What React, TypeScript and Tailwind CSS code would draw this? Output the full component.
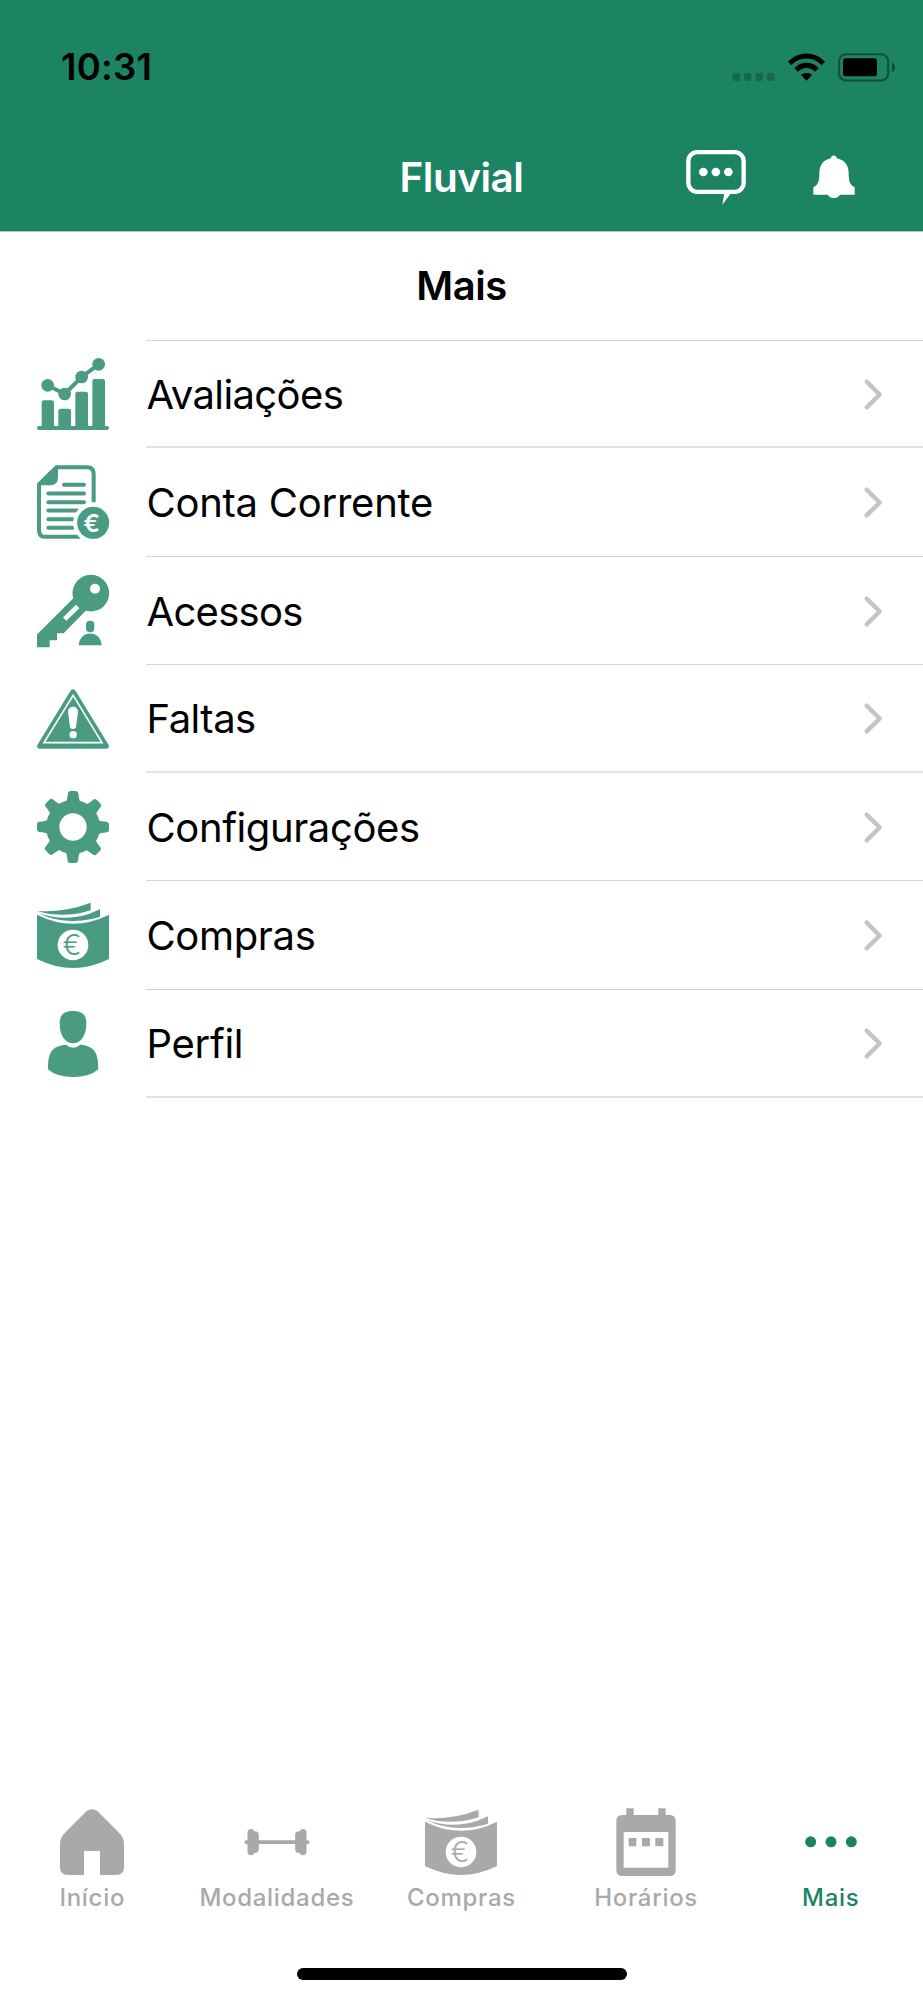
import type { ReactNode } from 'react'

type IconProps = { viewBox: string; className?: string; children: ReactNode }

function Icon({ viewBox, className = 'h-[72px] w-[72px]', children }: IconProps) {
  return (
    <svg viewBox={viewBox} className={`shrink-0 overflow-visible ${className}`} fill="currentColor" aria-hidden="true">
      {children}
    </svg>
  )
}

function ChartIcon() {
  return (
    <Icon viewBox="51 54 216 216">
      <path d="M65 260V188q0-7 7-7h23q7 0 7 7v72zM115 260V213q0-7 7-7h24q7 0 7 7v47zM166 260V162q0-7 7-7h24q7 0 7 7v98zM217 260V124q0-7 7-7h24q7 0 7 7v136z" />
      <rect x="51" y="258" width="216" height="12" rx="6" />
      <circle cx="83" cy="136" r="19" />
      <circle cx="134" cy="162" r="19" />
      <circle cx="185" cy="111" r="19" />
      <circle cx="236" cy="73" r="19" />
      <path d="M83 136L134 162L185 111L236 73" fill="none" stroke="currentColor" strokeWidth="12" />
    </Icon>
  )
}

function InvoiceIcon() {
  return (
    <Icon viewBox="51 379.5 216 216">
      <g fill="none" stroke="currentColor" strokeWidth="12">
        <path d="M221 488V403q0-20-20-20H110L57 435V572q0 20 20 20H180" />
        <path strokeLinecap="round" d="M132 436H192M85 462H192M85 488H192M85 513H172M85 539H158M85 565H158" />
      </g>
      <path d="M51 433L108 377L114 385V413q0 24-24 24H54z" />
      <circle cx="219.500" cy="550" r="54" fill="none" stroke="#fff" strokeWidth="12" />
      <circle cx="219.500" cy="550" r="48" />
      <text x="215" y="576" textAnchor="middle" fill="#fff" className="font-['Inter',sans-serif] text-[74px] font-semibold">€</text>
    </Icon>
  )
}

function KeyIcon() {
  return (
    <Icon viewBox="51 44.5 216 216">
      <path d="M51 223L160 114L198 151L131 219H111V240H89V261H51z" />
      <circle cx="212.500" cy="99" r="55" />
      <circle cx="225" cy="86" r="15" fill="#fff" />
      <path d="M129 172L168 134L178 144L139 182z" fill="#fff" />
      <rect x="198" y="182" width="25" height="34" rx="12" />
      <path d="M176 255C178 233 192 220 210.500 220S243 233 245 255z" />
    </Icon>
  )
}

function WarningIcon() {
  return (
    <Icon viewBox="51 370 216 216">
      <path d="M151 394q8-10 16 0L266 556q3 10-6 11H58q-9-1-6-11z" />
      <path d="M159.500 407L246 549H72z" fill="none" stroke="#fff" strokeWidth="5" />
      <path d="M144 456C144 436 174 436 174 456L168 501C167 510 151 510 150 501z" fill="#fff" />
      <circle cx="159.500" cy="525" r="11" fill="#fff" />
    </Icon>
  )
}

const teeth = [0, 45, 90, 135, 180, 225, 270, 315]

function GearIcon() {
  return (
    <Icon viewBox="51 65 216 216">
      <circle cx="159" cy="173" r="61" fill="none" stroke="currentColor" strokeWidth="40" />
      {teeth.map((a) => (
        <path key={a} transform={`rotate(${a} 159 173)`} d="M144 71q1-6 8-6h15q7 0 8 6q2 20 6 28h-43q4-8 6-28z" />
      ))}
    </Icon>
  )
}

function MoneyIcon() {
  return (
    <Icon viewBox="51 390 216 216">
      <path d="M51 437Q159 491 267 437V570Q159 624 51 570z" />
      <path d="M52 426Q130 432 212 401V424Q130 450 52 426z" />
      <path d="M54 432Q130 459 206 435L240 421V443Q140 474 54 432z" />
      <circle cx="159" cy="528" r="46" fill="#fff" />
      <text x="156" y="558" textAnchor="middle" className="font-['Inter',sans-serif] text-[84px] font-light">€</text>
    </Icon>
  )
}

function PersonIcon() {
  return (
    <Icon viewBox="51 84 216 216">
      <path d="M159 93C188 93 199 105 199 131C199 166 182 190 159 190S119 166 119 131C119 105 130 93 159 93z" />
      <path d="M84 268C84 218 94 199 138 194Q159 212 181 194C225 199 235 218 235 268Q210 291 159.500 291T84 268z" />
    </Icon>
  )
}

function HomeIcon() {
  return (
    <Icon viewBox="108 78 216 216">
      <path d="M199 94q17-13 34 0L297 158q15 15 15 34V261q0 24-24 24H240V213H192V285H144q-24 0-24-24V192q0-19 15-34z" />
    </Icon>
  )
}

function DumbbellIcon() {
  return (
    <Icon viewBox="661.5 78 216 216">
      <path d="M677 181H862a5 5.500 0 0 1 0 11H677a5 5.500 0 0 1 0-11z" />
      <path d="M681 156q1-9 11-9q8 0 9 7q14-1 14 11V208q0 12-14 11q-1 7-9 7q-10 0-11-9zM858 156q-1-9-11-9q-8 0-9 7q-14-1-14 11V208q0 12 14 11q1 7 9 7q10 0 11-9z" />
    </Icon>
  )
}

function CalendarIcon() {
  return (
    <Icon viewBox="719 78 216 216">
      <path d="M768 85h22v20h74V85h22v20h12q18 0 18 18V270q0 18-18 18H756q-18 0-18-18V123q0-18 18-18h12z" />
      <rect x="760" y="156" width="134" height="107" fill="#fff" />
      <rect x="775" y="174" width="23" height="25" rx="2" />
      <rect x="815" y="174" width="24" height="25" rx="2" />
      <rect x="855" y="174" width="24" height="25" rx="2" />
    </Icon>
  )
}

function DotsIcon() {
  return (
    <Icon viewBox="283.5 78 216 216">
      <circle cx="330.500" cy="185.500" r="16.500" />
      <circle cx="391.500" cy="185.500" r="16.500" />
      <circle cx="452.500" cy="185.500" r="16.500" />
    </Icon>
  )
}

function StatusIcons() {
  return (
    <Icon viewBox="216 66 492 90" className="h-[30px] w-[164px]">
      <g opacity="0.2">
        <rect x="218" y="129" width="22" height="24" rx="7" />
        <rect x="252" y="129" width="22" height="24" rx="7" />
        <rect x="286" y="129" width="23" height="24" rx="7" />
        <rect x="321" y="129" width="22" height="24" rx="7" />
      </g>
      <path d="M384 95C414 62 465 62 495 95L485 105C460 79 419 79 394 105z" />
      <path d="M403 115C423 93 456 93 476 115L465 125C450 110 429 110 414 125z" />
      <path d="M423 135C432 127 447 127 456 135L439.500 152z" />
      <rect x="537.500" y="72.500" width="147" height="79" rx="21" fill="none" stroke="currentColor" strokeWidth="6" opacity="0.4" />
      <rect x="549" y="85" width="102" height="54" rx="8" />
      <path d="M696 98q9 4 9 14t-9 14z" opacity="0.45" />
    </Icon>
  )
}

function ChatIcon() {
  return (
    <Icon viewBox="78 360 180 165" className="h-[55px] w-[60px]">
      <rect x="85" y="366.500" width="166" height="119" rx="27" fill="none" stroke="currentColor" strokeWidth="13" />
      <path d="M193 488L187 524L214 488z" />
      <circle cx="130" cy="426" r="13" />
      <circle cx="167.500" cy="426" r="13" />
      <circle cx="205" cy="426" r="13" />
    </Icon>
  )
}

function BellIcon() {
  return (
    <Icon viewBox="460 378 126 132" className="h-[44px] w-[42px]">
      <path d="M514 388a8.500 8.500 0 0 1 17 0C553 392 567 408 567 432C567 455 569 466 585 475V497H541Q535 507 523 507T504 497H461V475C477 466 479 455 479 432C479 408 492 392 514 388z" />
    </Icon>
  )
}

const rows = [
  { label: 'Avaliações', icon: <ChartIcon />, line: 'border-b-2 border-[#e2e2e2]', spacing: 'tracking-[-0.6px]' },
  { label: 'Conta Corrente', icon: <InvoiceIcon />, line: 'border-b border-[#d2d2d3]', spacing: 'tracking-[-0.25px]' },
  { label: 'Acessos', icon: <KeyIcon />, line: 'border-b border-[#d2d2d3]', spacing: 'tracking-[-0.7px]' },
  { label: 'Faltas', icon: <WarningIcon />, line: 'border-b-2 border-[#e2e2e2]', spacing: 'tracking-[-0.5px]' },
  { label: 'Configurações', icon: <GearIcon />, line: 'border-b border-[#d2d2d3]', spacing: 'tracking-[-0.4px]' },
  { label: 'Compras', icon: <MoneyIcon />, line: 'border-b border-[#d2d2d3]', spacing: 'tracking-[-0.35px]' },
  { label: 'Perfil', icon: <PersonIcon />, line: 'border-b-2 border-[#e2e2e2]', spacing: 'tracking-[-0.3px]' },
]

const tabs = [
  { label: 'Início', icon: <HomeIcon />, active: false },
  { label: 'Modalidades', icon: <DumbbellIcon />, active: false },
  { label: 'Compras', icon: <MoneyIcon />, active: false },
  { label: 'Horários', icon: <CalendarIcon />, active: false },
  { label: 'Mais', icon: <DotsIcon />, active: true },
]

export default function App() {
  return (
    <div className="flex h-[2000px] w-[923px] flex-col overflow-hidden bg-white font-['Inter',sans-serif] text-black">
      <header className="h-[232px] shrink-0 border-b border-[#b9c4c0] bg-[#1c8363]">
        <div className="flex h-[134px] items-center justify-between pl-[61px] pr-[27px]">
          <span className="pt-px text-[36.5px] font-[580] leading-none tracking-[0.3px]">10:31</span>
          <StatusIcons />
        </div>
        <div className="grid h-[86px] grid-cols-3 items-center text-white">
          <h1 className="col-start-2 pt-[3px] text-center text-[40.5px] font-[580] leading-none tracking-[-0.5px]">Fluvial</h1>
          <div className="flex items-center justify-end gap-[67px] pr-[68px]">
            <ChatIcon />
            <BellIcon />
          </div>
        </div>
      </header>

      <main className="flex-1">
        <h2 className="flex h-[108px] items-center justify-center text-[40px] font-[580] tracking-[-0.5px]">Mais</h2>
        <ul>
          {rows.map((row, i) => (
            <li key={row.label} className="flex h-[108.25px] items-center pl-[37px] text-[#499c82]">
              {row.icon}
              <div
                className={`ml-[37px] flex h-full flex-1 items-center justify-between pr-[40px] pt-[2px] ${row.line} ${
                  i === 0 ? 'border-t border-t-[#d2d2d3]' : ''
                }`}
              >
                <span className={`pl-[0.5px] pt-px text-[40px] leading-none text-black ${row.spacing}`}>{row.label}</span>
                <Icon viewBox="252 146 57 93" className="h-[31px] w-[19px] text-[#c4c4c6]">
                  <path d="M260 154L299 192.500L260 231" fill="none" stroke="currentColor" strokeWidth="13" strokeLinecap="round" strokeLinejoin="round" />
                </Icon>
              </div>
            </li>
          ))}
        </ul>
      </main>

      <nav className="grid h-[162px] shrink-0 grid-cols-5">
        {tabs.map((tab) => (
          <a key={tab.label} className={`flex flex-col items-center ${tab.active ? 'text-[#1c8363]' : 'text-[#a9a9a9]'}`}>
            {tab.icon}
            <span className="mt-[8px] text-[24px] font-[450] leading-[24px] tracking-[0.7px]">{tab.label}</span>
          </a>
        ))}
      </nav>
      <div className="mx-auto mb-[20px] h-[12px] w-[330px] shrink-0 rounded-full bg-black" />
    </div>
  )
}
